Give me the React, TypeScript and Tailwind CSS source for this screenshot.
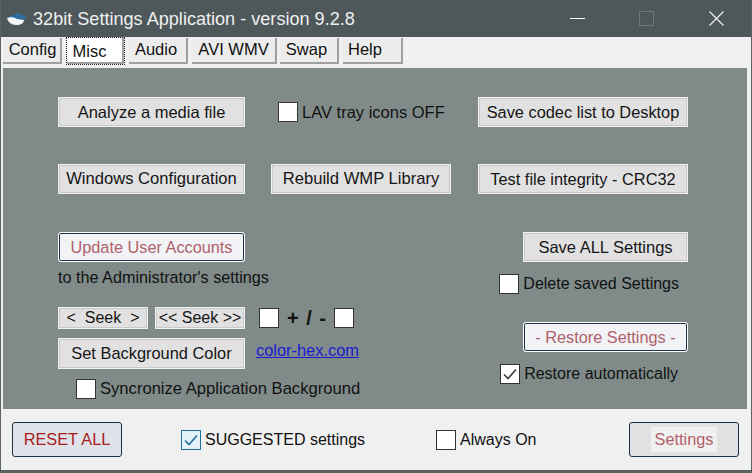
const sans = "font-['Liberation_Sans',Arial,sans-serif]";

function Tab({ label, className, active }: { label: string; className: string; active?: boolean }) {
  return (
    <div
      className={`${className} h-[26px] shrink-0 flex items-center justify-center text-[16.5px] text-[#111] border-b-2 border-r-2 border-b-[#a0a0a0] border-r-[#a0a0a0] ${
        active ? "bg-white outline-1 outline-dotted outline-[#222] border-transparent" : "bg-[#ececec]"
      }`}
    >
      {label}
    </div>
  );
}

function Btn({ label, width, height = "h-[30px]", text = "text-[16.5px]" }: { label: string; width: string; height?: string; text?: string }) {
  return (
    <div className={`${width} ${height} ${text} shrink-0 flex items-center justify-center whitespace-pre border border-[#f2f2f2] outline-1 -outline-offset-2 outline-[#c9c9c9] bg-[#e1e1e1] text-[#151515]`}>
      {label}
    </div>
  );
}

function FocusBtn({ label, width }: { label: string; width: string }) {
  return (
    <div className={`${width} h-[30px] shrink-0 flex items-center justify-center text-[16.3px] text-[#b0616b] bg-[#f1f3f6] rounded-[3px] border border-white shadow-[inset_0_0_0_1px_#1c3048]`}>
      {label}
    </div>
  );
}

function Box({ checked, blue }: { checked?: boolean; blue?: boolean }) {
  return (
    <div
      className={`size-[20px] shrink-0 flex items-center justify-center border ${
        blue ? "border-[#1f6f9f] bg-[#e6f2f9]" : "border-[#333] bg-white"
      }`}
    >
      {checked && (
        <svg width="16" height="16" viewBox="0 0 16 16" fill="none" stroke={blue ? "#1f6f9f" : "#3a3a3a"} strokeWidth="1.6">
          <path d="M2 8.5 L6 12.5 L14 3.5" />
        </svg>
      )}
    </div>
  );
}

function Check({ label, checked, blue, className = "", text = "text-[16px]" }: { label: string; checked?: boolean; blue?: boolean; className?: string; text?: string }) {
  return (
    <div className={`flex items-center gap-[4px] ${text} text-[#111] ${className}`}>
      <Box checked={checked} blue={blue} />
      <span className="whitespace-nowrap">{label}</span>
    </div>
  );
}

function BottomBtn({ children, className = "" }: { children: React.ReactNode; className?: string }) {
  return (
    <div className={`w-[110px] h-[35px] shrink-0 flex items-center justify-center text-[16.3px] rounded-[3px] border border-[#1c3048] ${className}`}>
      {children}
    </div>
  );
}

export default function App() {
  return (
    <div className={`${sans} w-[752px] h-[473px] flex flex-col overflow-hidden bg-[#f0f0f0] border-x border-x-[#5a6262] border-b-[3px] border-b-[#5a6262]`}>
      {/* title bar */}
      <div className="h-[37px] shrink-0 flex items-center bg-[#4e5759] text-[#eef0f0] -mx-px">
        <svg className="ml-[6px] mt-[1px]" width="21" height="15" viewBox="0 0 21 15">
          <path d="M1 7 C2 4 5 4 7 4 C9 1 14 0 16 3 C18 3 20 4 20 7 L12 8 L5 6 Z" fill="#2f6f9f" />
          <path d="M1 6 C4 5 8 5 11 7 L18 8 C18 11 15 13 10 13 C5 13 2 10 1 6 Z" fill="#f4f6f7" />
        </svg>
        <span className="ml-[6px] pt-[3px] text-[18.1px]">32bit Settings Application - version 9.2.8</span>
        <div className="ml-auto flex items-center">
          <div className="w-[15px] h-px bg-white mr-[54px]" />
          <div className="size-[15px] border border-[#6f797b] mr-[55px]" />
          <svg className="mr-[28px]" width="15" height="15" viewBox="0 0 15 15" stroke="#f4f4f4" strokeWidth="1.1">
            <path d="M0.5 0.5 L14.5 14.5 M14.5 0.5 L0.5 14.5" />
          </svg>
        </div>
      </div>

      {/* tabs */}
      <div className="h-[31px] shrink-0 flex items-start pl-[2px] pt-[1px]">
        <Tab label="Config" className="w-[59px] pl-[2px] pb-[2px]" />
        <Tab label="Misc" className="w-[57px] ml-[5px] pr-[10px] pt-[2px]" active />
        <Tab label="Audio" className="w-[59px] ml-[5px] pr-[3px] pb-[2px]" />
        <Tab label="AVI WMV" className="w-[85px] ml-[4px] pb-[2px]" />
        <Tab label="Swap" className="w-[59px] ml-[3px] pr-[4px] pb-[2px]" />
        <Tab label="Help" className="w-[60px] ml-[4px] pr-[14px] pb-[2px]" />
      </div>

      {/* main panel */}
      <div className="h-[341px] shrink-0 ml-[2px] w-[744px] bg-[#808b89] pl-[55px] pr-[59px] pt-[29px] text-[#111]">
        <div className="flex items-center">
          <Btn label="Analyze a media file" width="w-[187px]" />
          <Check label="LAV tray icons OFF" className="ml-[33px]" text="text-[16.5px]" />
          <div className="ml-auto"><Btn label="Save codec list to Desktop" width="w-[210px]" text="text-[16.35px]" /></div>
        </div>
        <div className="flex items-center mt-[37px]">
          <Btn label="Windows Configuration" width="w-[187px]" text="text-[16.6px]" />
          <div className="ml-[26px]"><Btn label="Rebuild WMP Library" width="w-[180px]" text="text-[16.6px]" /></div>
          <div className="ml-auto"><Btn label="Test file integrity - CRC32" width="w-[210px]" text="text-[16.35px]" /></div>
        </div>
        <div className="flex justify-between mt-[38px]">
          <div className="flex flex-col">
            <FocusBtn label="Update User Accounts" width="w-[187px]" />
            <span className="mt-[6px] text-[16.2px] leading-[18px]">to the Administrator's settings</span>
            <div className="flex items-center mt-[21px]">
              <Btn label="<  Seek  >" width="w-[90px]" height="h-[22px]" text="text-[16px]" />
              <div className="ml-[7px]"><Btn label="<< Seek >>" width="w-[90px]" height="h-[22px]" text="text-[16px]" /></div>
              <div className="ml-[14px] size-[20px] bg-white border border-[#333]" />
              <span className="mx-[8px] text-[20px] font-bold leading-none whitespace-pre [word-spacing:2px]">+ / -</span>
              <div className="size-[20px] bg-white border border-[#333]" />
            </div>
            <div className="flex items-start mt-[9px]">
              <Btn label="Set Background Color" width="w-[187px]" height="h-[31px]" text="text-[16.4px]" />
              <a className="ml-[11px] text-[16.4px] leading-[24px] text-[#1a1ad0] underline">color-hex.com</a>
            </div>
            <Check label="Syncronize Application Background" className="ml-[18px] mt-[8px]" text="text-[16.6px]" />
          </div>
          <div className="flex flex-col items-end">
            <Btn label="Save ALL Settings" width="w-[165px]" />
            <Check label="Delete saved Settings" className="mt-[10px] mr-[9px]" />
            <div className="mt-[26px]"><FocusBtn label="- Restore Settings -" width="w-[165px]" /></div>
            <Check label="Restore automatically" checked className="mt-[10px] mr-[10px]" />
          </div>
        </div>
      </div>

      {/* bottom bar */}
      <div className="flex-1 flex items-center pl-[11px] text-[16px] text-[#111]">
        <BottomBtn className="bg-[#dfe3e9] text-[#a81c1c]">RESET ALL</BottomBtn>
        <Check label="SUGGESTED settings" checked blue className="ml-[59px]" />
        <Check label="Always On" className="ml-[71px]" />
        <BottomBtn className="ml-auto mr-[12px] bg-[#e1e1e1] text-[#b0616b]">
          <span className="bg-[#f0f0f0] px-[4px]">Settings</span>
        </BottomBtn>
      </div>
    </div>
  );
}
